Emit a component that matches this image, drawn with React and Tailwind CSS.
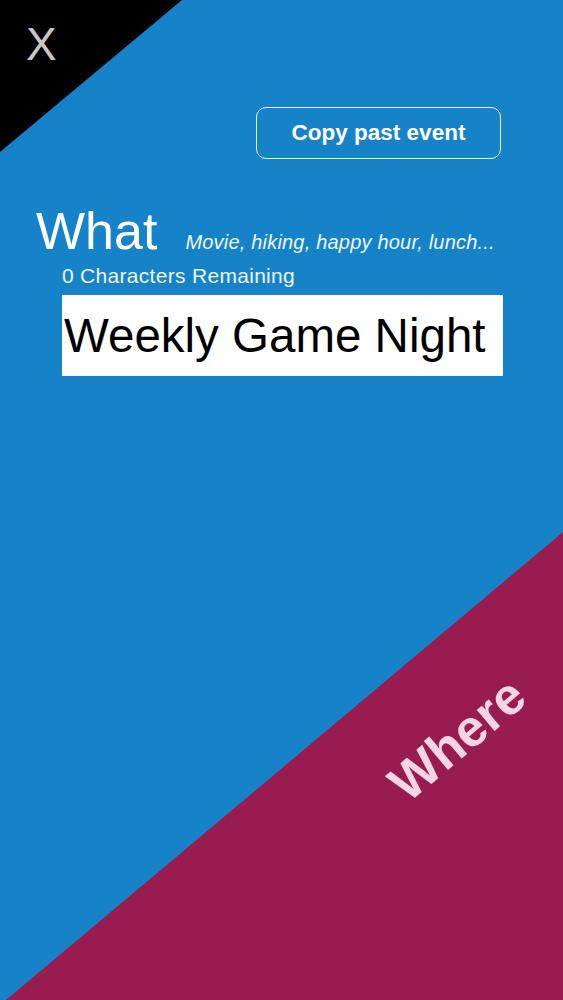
import React, { useState } from 'react';

const FONT = { fontFamily: '"Liberation Sans", Arial, sans-serif' };

const App = () => {
  const [title] = useState('Weekly Game Night');

  return (
    <div className="relative h-[1000px] w-full overflow-hidden bg-[#1683c8]" style={FONT}>
      {/* corner shapes */}
      <div className="absolute inset-0 bg-black [clip-path:polygon(0_0,182px_0,0_152px)]" />
      <div className="absolute inset-0 bg-[#981c4f] [clip-path:polygon(563px_532px,563px_1000px,6px_1000px)]" />

      <button className="absolute left-[26px] top-[21px] text-[46px] font-light leading-none text-[#c6c6c6]">
        X
      </button>

      <div className="relative flex flex-col pt-[107px]">
        <div className="flex justify-end pr-[62px]">
          <button className="flex h-[52px] w-[245px] items-center justify-center rounded-[10px] border-[1.5px] border-[#e9f3fb] text-[22.5px] font-bold text-white">
            Copy past event
          </button>
        </div>

        <div className="mt-[46px] flex items-baseline pl-[36px] text-white">
          <h1 className="text-[52px] leading-none">What</h1>
          <span className="ml-[28px] text-[20px] italic tracking-[0.2px] text-[#eef6fc]">Movie, hiking, happy hour, lunch...</span>
        </div>

        <p className="ml-[62px] mt-[8px] text-[21px] leading-none tracking-[0.3px] text-[#eef6fc]">0 Characters Remaining</p>

        <div className="ml-[62px] mt-[9px] flex h-[81px] w-[441px] items-center bg-white pl-[2px]">
          <span className="text-[47.5px] leading-none text-black">{title}</span>
        </div>
      </div>

      <span className="absolute left-[457px] top-[739px] -translate-x-1/2 -translate-y-1/2 rotate-[-40deg] text-[52px] font-bold leading-none text-[#f3d5e4]">
        Where
      </span>
    </div>
  );
};

export default App;
